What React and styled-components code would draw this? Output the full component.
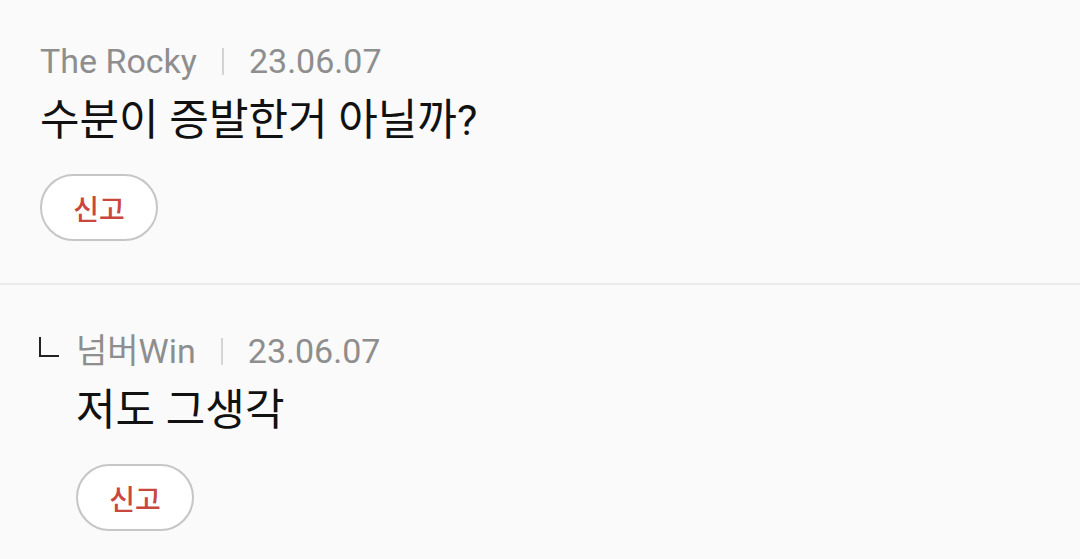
import React from "react";
import styled, { createGlobalStyle } from "styled-components";

const Global = createGlobalStyle`
  html, body { margin: 0; padding: 0; background: #fafafa; }
  body { font-family: Roboto, "Noto Sans CJK KR", sans-serif; }
`;

const List = styled.div`
  display: flex;
  flex-direction: column;
  background: #fafafa;
  min-height: 559px;
`;

const Comment = styled.section`
  display: flex;
  flex-direction: row;
  align-items: flex-start;
  padding: ${(p) => (p.$reply ? "46px 0 0 39px" : "41px 0 42px 40px")};
  border-bottom: ${(p) => (p.$reply ? "none" : "2px solid #ebebeb")};
`;

const ReplyMark = styled.span`
  width: 20px;
  height: 20px;
  margin: 6px 17px 0 0;
  border-left: 2px solid #222;
  border-bottom: 2px solid #222;
  box-sizing: border-box;
  flex: none;
`;

const Body = styled.div`
  display: flex;
  flex-direction: column;
  align-items: flex-start;
`;

const Meta = styled.div`
  display: flex;
  align-items: center;
  font-size: 34px;
  line-height: 40px;
  color: #8e8e8e;
`;

const Sep = styled.span`
  width: 2px;
  height: 27px;
  background: #d4d4d4;
  margin: 0 25px;
`;

const Text = styled.p`
  margin: 12px 0 0;
  font-size: 43px;
  line-height: 54px;
  color: #111;
`;

const Report = styled.button`
  margin-top: 27px;
  width: 118px;
  height: 67px;
  border-radius: 34px;
  border: 2px solid #c6c6c6;
  background: #fff;
  color: #c9473c;
  font-family: "Noto Sans CJK KR", sans-serif;
  font-weight: 500;
  font-size: 28px;
  padding: 0;
  display: flex;
  align-items: center;
  justify-content: center;
`;

const comments = [
  { author: "The Rocky", date: "23.06.07", text: "수분이 증발한거 아닐까?", reply: false },
  { author: "넘버Win", date: "23.06.07", text: "저도 그생각", reply: true },
];

export default function App() {
  return (
    <>
      <Global />
      <List>
        {comments.map((c, i) => (
          <Comment key={i} $reply={c.reply}>
            {c.reply && <ReplyMark aria-label="ㄴ" />}
            <Body>
              <Meta>
                <span>{c.author}</span>
                <Sep />
                <span>{c.date}</span>
              </Meta>
              <Text>{c.text}</Text>
              <Report>신고</Report>
            </Body>
          </Comment>
        ))}
      </List>
    </>
  );
}
